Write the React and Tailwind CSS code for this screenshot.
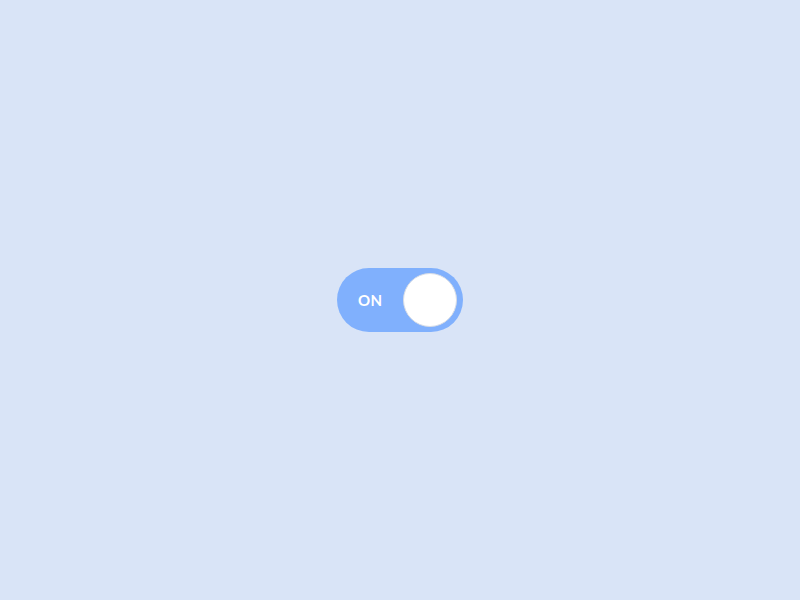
import { useState } from "react";

export default function App() {
  const [on, setOn] = useState(true);

  return (
    <div className="flex h-[600px] w-[800px] items-center justify-center bg-[#d9e4f7]">
      <button
        onClick={() => setOn(!on)}
        className="flex h-16 w-[126px] items-center justify-between rounded-full bg-[#80b0fd] pl-[21px] pr-[6px]"
      >
        <span className="font-[family-name:Lato,sans-serif] text-[15px] font-bold tracking-[0.3px] text-white">
          {on ? "ON" : "OFF"}
        </span>
        <span className="h-[54px] w-[54px] rounded-full border border-[#d8dde6] bg-white" />
      </button>
    </div>
  );
}
